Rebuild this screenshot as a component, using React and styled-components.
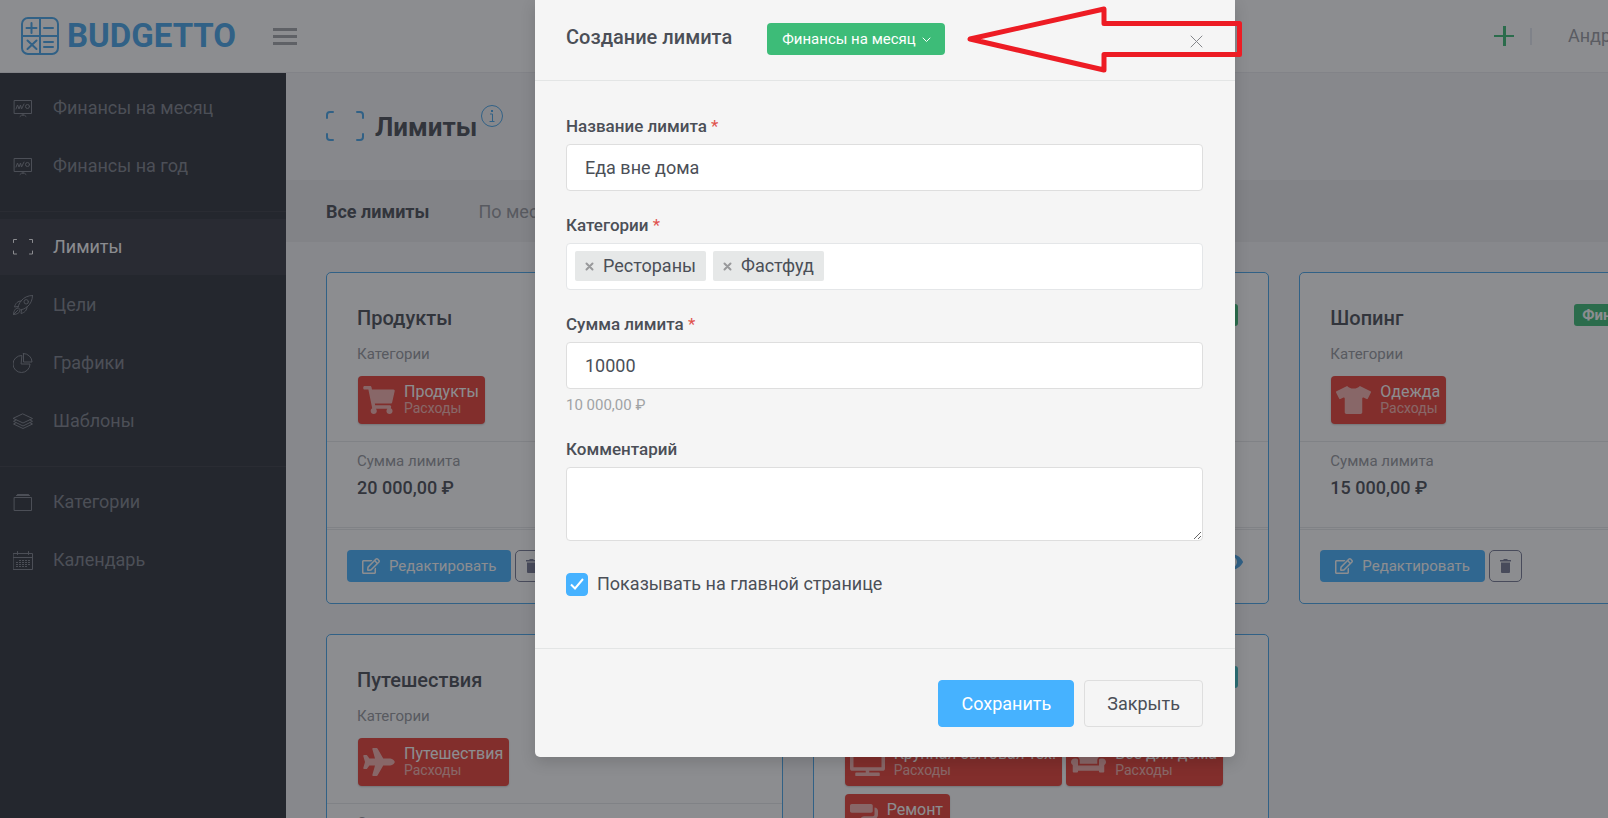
import React from "react";
import styled, { createGlobalStyle } from "styled-components";
import {
  FaShoppingCart,
  FaTshirt,
  FaPlane,
  FaTv,
  FaCouch,
  FaPaintRoller,
  FaRegEdit,
  FaEye,
} from "react-icons/fa";

const Global = createGlobalStyle`
  *, *::before, *::after { box-sizing: border-box; }
  body {
    margin: 0;
    overflow: hidden;
    background: #f5f5f6;
    color: #4b4f57;
    font-family: Roboto, "Open Sans", sans-serif;
    font-size: 18px;
    line-height: 24px;
  }
  button, input, textarea { font: inherit; color: inherit; }
`;

/* ---------- shell ---------- */

const Viewport = styled.div`
  height: 100vh;
  overflow: hidden;
`;

const Page = styled.div`
  position: relative;
  display: flex;
  flex-direction: column;
  min-width: 1770px;
  height: 100%;
`;

const TopBar = styled.header`
  display: flex;
  align-items: center;
  flex: none;
  height: 73px;
  padding: 0 110px 0 20px;
  background: #fff;
  border-bottom: 1px solid #ebebee;
`;

const Brand = styled.a`
  display: flex;
  align-items: center;
  gap: 7px;
  width: 215px;
  color: #48a6ea;
  font-size: 33px;
  font-weight: 700;
  line-height: 40px;
  text-decoration: none;

  svg { flex: none; }
`;

const IconButton = styled.button`
  display: flex;
  padding: 0;
  border: 0;
  background: none;
  color: ${(p) => p.$color};
  cursor: pointer;
`;

const MenuToggle = styled(IconButton)`
  margin-left: 38px;
`;

const TopActions = styled.div`
  display: flex;
  align-items: center;
  gap: 16px;
  width: 166px;
  margin-left: auto;
`;

const Rule = styled.span`
  width: 2px;
  height: 17px;
  background: #e4e9f0;
`;

const UserName = styled.a`
  padding-left: 20px;
  color: #9a9ca3;
  text-decoration: none;
`;

const Columns = styled.div`
  display: flex;
  flex: 1;
  min-height: 0;
`;

/* ---------- sidebar ---------- */

const Sidebar = styled.nav`
  flex: none;
  width: 286px;
  padding-top: 7px;
  background: #2e323a;
`;

const NavList = styled.ul`
  display: flex;
  flex-direction: column;
  gap: 2px;
  margin: 0;
  padding: 0 0 17px;
  list-style: none;

  & + & {
    padding-top: 7px;
    border-top: 1px solid #3a3d45;
  }
`;

const NavLink = styled.a`
  display: flex;
  align-items: center;
  gap: 20px;
  height: 56px;
  padding-left: 13px;
  background: ${(p) => (p.$active ? "#383a45" : "none")};
  color: ${(p) => (p.$active ? "#fdfdfe" : "#7f838c")};
  text-decoration: none;

  svg { flex: none; }
`;

/* ---------- content ---------- */

const Main = styled.main`
  flex: 1;
  min-width: 0;
`;

const TitleBar = styled.div`
  display: flex;
  align-items: center;
  gap: 11px;
  height: 107px;
  padding: 0 40px;
  color: #48a6ea;
`;

const TitleGroup = styled.div`
  display: flex;
  align-items: center;
  gap: 4px;
`;

const PageTitle = styled.h1`
  margin: 0;
  color: #4b4e57;
  font-size: 26px;
  font-weight: 700;
  line-height: 36px;
`;

const TabBar = styled.nav`
  display: flex;
  align-items: center;
  gap: 49px;
  height: 62px;
  padding: 2px 40px 0;
  background: #ebebed;
`;

const Tab = styled.a`
  color: ${(p) => (p.$active ? "#4b4e57" : "#96989e")};
  font-weight: ${(p) => (p.$active ? 700 : 400)};
  text-decoration: none;
`;

const CardGrid = styled.div`
  display: grid;
  grid-template-columns: repeat(3, 1fr);
  align-items: start;
  gap: 30px;
  padding: 30px 14px 30px 40px;
`;

const CardBox = styled.article`
  display: flex;
  flex-direction: column;
  background: #fff;
  border: 1px solid #48a6ea;
  border-radius: 5px;
`;

const CardTop = styled.div`
  min-height: 169px;
  padding: 30px 30px 8px;
  border-bottom: 1px solid #e7e8ea;
`;

const CardHead = styled.div`
  display: flex;
  justify-content: space-between;
  height: 39px;
  padding-top: 1px;
`;

const CardTitle = styled.h2`
  margin: 0;
  padding-top: 2px;
  color: #4b4e57;
  font-size: 20px;
  font-weight: 500;
  line-height: 24px;
`;

const Badge = styled.span`
  height: 22px;
  padding: 0 8px;
  border-radius: 3px;
  background: ${(p) => p.$color};
  color: #fff;
  font-size: 15px;
  font-weight: 700;
  line-height: 22px;
`;

const Caption = styled.div`
  color: #96989e;
  font-size: 15px;
  line-height: 24px;
`;

const Tags = styled.div`
  display: flex;
  flex-wrap: wrap;
  gap: 8px 4px;
  padding: 10px 0 8px 1px;
`;

const Tag = styled.a`
  display: flex;
  align-items: center;
  gap: 9px;
  height: 48px;
  padding: 0 6px 0 5px;
  border-radius: 4px;
  background: #ea4136;
  box-shadow: 0 1px 2px rgba(0, 0, 0, 0.2);
  color: #fff;
  text-decoration: none;

  svg {
    width: ${(p) => p.$iconWidth}px;
    height: 28px;
    opacity: 0.6;
  }
`;

const TagText = styled.span`
  display: flex;
  flex-direction: column;
  font-size: 16px;
  line-height: 16px;

  small {
    font-size: 14px;
    line-height: 16px;
    opacity: 0.6;
  }
`;

const CardSum = styled.div`
  height: 86px;
  padding: 7px 30px 0;
  border-bottom: 1px solid #e7e8ea;
`;

const Amount = styled.div`
  padding-top: 3px;
  color: #4b4e57;
  font-weight: 500;
`;

const CardFoot = styled.div`
  display: flex;
  align-items: flex-start;
  gap: 4px;
  margin-top: 1px;
  padding: 20px 25px 21px 20px;
  border-top: 1px solid #e7e8ea;
`;

const EditButton = styled.button`
  display: flex;
  align-items: center;
  gap: 9px;
  height: 32px;
  padding: 0 15px;
  border: 0;
  border-radius: 4px;
  background: #46b2ff;
  color: #fff;
  font-size: 15px;
`;

const TrashButton = styled.button`
  display: flex;
  align-items: center;
  justify-content: center;
  width: 33px;
  height: 32px;
  padding: 0;
  border: 1px solid #767a94;
  border-radius: 5px;
  background: none;
  color: #767a94;
`;

const Watch = styled(IconButton)`
  margin: 0 0 0 auto;
`;

/* ---------- modal ---------- */

const Backdrop = styled.div`
  position: absolute;
  inset: 0;
  display: flex;
  align-items: flex-start;
  justify-content: center;
  background: rgba(26, 28, 34, 0.5);
`;

const Dialog = styled.section`
  width: 700px;
  border-radius: 0 0 5px 5px;
  background: #f5f5f5;
  box-shadow: 0 5px 15px rgba(0, 0, 0, 0.15);
`;

const DialogHead = styled.header`
  display: flex;
  align-items: center;
  gap: 35px;
  height: 81px;
  padding: 0 32px 2px 31px;
  border-bottom: 1px solid #e3e5e5;
`;

const DialogTitle = styled.h2`
  margin: 0;
  padding-bottom: 4px;
  font-size: 20px;
  font-weight: 500;
  line-height: 24px;
`;

const PeriodButton = styled.button`
  display: flex;
  align-items: center;
  gap: 6px;
  height: 32px;
  padding: 0 14px 0 15px;
  border: 0;
  border-radius: 4px;
  background: #3dbc78;
  color: #fff;
  font-size: 15px;
`;

const CloseIcon = styled(IconButton)`
  margin: 4px 0 0 auto;
`;

const DialogBody = styled.div`
  display: flex;
  flex-direction: column;
  gap: 22px;
  padding: 33px 32px 52px 31px;
`;

const Field = styled.div`
  display: flex;
  flex-direction: column;
`;

const Label = styled.label`
  margin-bottom: 6px;
  font-size: 17px;
  font-weight: 500;
  line-height: 24px;

  em {
    color: #e0524d;
    font-style: normal;
    font-weight: 400;
  }
`;

const TextInput = styled.input`
  height: 47px;
  padding: 0 18px;
  border: 1px solid #dedede;
  border-radius: 4px;
  background: #fff;
  outline: 0;
`;

const Notes = styled.textarea`
  display: block;
  height: 74px;
  padding: 10px 18px;
  border: 1px solid #dedede;
  border-radius: 4px;
  background: #fff;
  outline: 0;
  resize: vertical;
`;

const ChipBox = styled.div`
  display: flex;
  gap: 7px;
  height: 47px;
  padding: 7px 8px;
  border: 1px solid #e4e6e8;
  border-radius: 4px;
  background: #fff;
`;

const Chip = styled.span`
  display: flex;
  align-items: center;
  gap: 9px;
  height: 30px;
  padding: 0 10px;
  border-radius: 2px;
  background: #e6e8e8;
`;

const ChipRemove = styled.button`
  display: flex;
  padding: 0;
  border: 0;
  background: none;
  color: #98999b;
`;

const Hint = styled.div`
  margin-top: 6px;
  color: #a0a3a5;
  font-size: 15px;
  line-height: 20px;
`;

const CheckRow = styled.label`
  display: flex;
  align-items: center;
  gap: 9px;
  margin-top: 9px;
`;

const CheckWrap = styled.span`
  display: grid;
  width: 22px;
  height: 23px;
  place-items: center;

  > * { grid-area: 1 / 1; }
  svg { pointer-events: none; }
`;

const CheckInput = styled.input`
  appearance: none;
  width: 100%;
  height: 100%;
  margin: 0;
  border: 1px solid #c8ccd0;
  border-radius: 4px;
  background: #fff;

  &:checked {
    border-color: #46b2ff;
    background: #46b2ff;
  }
`;

const DialogFoot = styled.footer`
  display: flex;
  justify-content: flex-end;
  gap: 10px;
  padding: 31px 32px 30px 31px;
  border-top: 1px solid #e3e5e5;
`;

const ActionButton = styled.button`
  height: 47px;
  padding: 0 22px;
  border: 1px solid ${(p) => (p.$primary ? "#46b2ff" : "#dedede")};
  border-radius: 4px;
  background: ${(p) => (p.$primary ? "#46b2ff" : "transparent")};
  color: ${(p) => (p.$primary ? "#fff" : "#4b4f57")};
`;

const Pointer = styled.svg`
  position: absolute;
  top: 4px;
  left: 50%;
  margin-left: 80px;
  pointer-events: none;
`;

/* ---------- icons ---------- */

const Line = ({ size = 20, box = 20, width = 1, children }) => (
  <svg
    width={size}
    height={size}
    viewBox={`0 0 ${box} ${box}`}
    fill="none"
    stroke="currentColor"
    strokeWidth={width}
    strokeLinecap="round"
    strokeLinejoin="round"
    aria-hidden="true"
  >
    {children}
  </svg>
);

const BoardIcon = () => (
  <Line>
    <path d="M1.500 2.500h17v13h-17zM10 15.500v1.500M7 18.500l1.500-1.300h3l1.500 1.300" />
    <path d="M3 11l1.500-4 1.500 4 1.500-4 1 4 2.500-5" />
    <circle cx="14.500" cy="8.500" r="2" />
  </Line>
);
const FrameIcon = () => (
  <Line>
    <path d="M.5 5.500v-3h3M16.500 2.500h3v3M19.500 14v3h-3M3.500 17h-3v-3" />
  </Line>
);
const RocketIcon = () => (
  <Line>
    <path d="M19.500.5c-4.500 0-8.500 1.800-11.500 5.500-1.500 2-2.500 4-3 6.500l2.500 2.500c2.500-.5 4.500-1.500 6.500-3 3.700-3 5.500-7 5.500-11.500z" />
    <circle cx="13.200" cy="6.800" r="2.200" />
    <path d="M8 6c-3 0-5.500 2-6.500 6l3.700-.500M14 12c0 3-2 5.500-6 6.500l.500-3.700" />
    <path d="M4.500 13.200c-2.500.300-3.500 2-4 6.300 4.300-.500 6-1.500 6.300-4M.5 19.500L5 15" />
  </Line>
);
const PieIcon = () => (
  <Line>
    <path d="M8.500 2.500a8.500 8.500 0 1 0 8.500 8.500H8.500z" />
    <path d="M10.500.5v8.500h8.500a8.500 8.500 0 0 0-8.500-8.500z" />
  </Line>
);
const LayersIcon = () => (
  <Line>
    <path d="M10 3l9.500 4.500L10 12 .5 7.500z" />
    <path d="M3 9l-2.500 1.300L10 15l9.500-4.700L17 9M3 11.700L.5 13 10 17.500l9.500-4.500-2.500-1.300" />
  </Line>
);
const BoxIcon = () => (
  <Line>
    <path d="M1.500 5.500h17v13h-17zM3.500 3.500h13M4.500 2.500h11" />
  </Line>
);
const CalendarIcon = () => (
  <Line>
    <path d="M.5 3.500h19v16H.5zM.5 7.500h19M4.500 1.500v3M15.500 1.500v3" />
    <path d="M6 10.500h11M3 12.500h14M3 14.500h14M3 16.500h11" strokeDasharray="2 1" strokeLinecap="butt" />
  </Line>
);
const LogoIcon = () => (
  <Line size={40} box={40} width={2}>
    <rect x="2" y="2" width="36" height="36" rx="6" />
    <path d="M20 2v36M2 20h36M11.500 7v10M6.500 12h10M24 12h9M7.500 24.500l9 8.500M16.500 24.500l-9 8.500M24 26h9M24 31h9" />
  </Line>
);
const TrashIcon = () => (
  <svg width="11" height="14" viewBox="0 0 11 14" fill="currentColor" aria-hidden="true">
    <path d="M3.500 0h4v1H11v1.500H0V1h3.500zM1 3.500h9v9.500a1 1 0 0 1-1 1H2a1 1 0 0 1-1-1z" />
  </svg>
);

/* ---------- data ---------- */

const menu = [
  [
    { text: "Финансы на месяц", icon: BoardIcon },
    { text: "Финансы на год", icon: BoardIcon },
  ],
  [
    { text: "Лимиты", icon: FrameIcon, active: true },
    { text: "Цели", icon: RocketIcon },
    { text: "Графики", icon: PieIcon },
    { text: "Шаблоны", icon: LayersIcon },
  ],
  [
    { text: "Категории", icon: BoxIcon },
    { text: "Календарь", icon: CalendarIcon },
  ],
];

const GREEN = "#3cbc76";
const TEAL = "#3fc1c9";

const cards = [
  { title: "Продукты", badge: GREEN, sum: "20 000,00 ₽", tags: [["Продукты", FaShoppingCart, 32]] },
  { title: "", badge: GREEN, sum: "", tags: [] },
  { title: "Шопинг", badge: GREEN, sum: "15 000,00 ₽", tags: [["Одежда", FaTshirt, 35]] },
  { title: "Путешествия", badge: TEAL, sum: "", tags: [["Путешествия", FaPlane, 32]] },
  {
    title: "",
    badge: TEAL,
    sum: "",
    tags: [
      ["Крупная бытовая тех.", FaTv, 35],
      ["Все для дома", FaCouch, 35],
      ["Ремонт", FaPaintRoller, 28],
    ],
  },
];

function Card({ title, badge, sum, tags }) {
  return (
    <CardBox>
      <CardTop>
        <CardHead>
          <CardTitle>{title}</CardTitle>
          <Badge $color={badge}>{badge === GREEN ? "Финансы на месяц" : "Финансы на год"}</Badge>
        </CardHead>
        <Caption>Категории</Caption>
        <Tags>
          {tags.map(([name, Icon, iconWidth]) => (
            <Tag href="#" key={name} $iconWidth={iconWidth}>
              <Icon aria-hidden="true" />
              <TagText>
                {name}
                <small>Расходы</small>
              </TagText>
            </Tag>
          ))}
        </Tags>
      </CardTop>
      <CardSum>
        <Caption>Сумма лимита</Caption>
        <Amount>{sum}</Amount>
      </CardSum>
      <CardFoot>
        <EditButton type="button">
          <FaRegEdit size={18} aria-hidden="true" />
          Редактировать
        </EditButton>
        <TrashButton type="button" aria-label="Удалить">
          <TrashIcon />
        </TrashButton>
        <Watch type="button" $color="#48a6ea" aria-label="Показать">
          <FaEye size={24} />
        </Watch>
      </CardFoot>
    </CardBox>
  );
}

function ChipItem({ children }) {
  return (
    <Chip>
      <ChipRemove type="button" aria-label={`Убрать ${children}`}>
        <Line size={9} box={9} width={2}>
          <path d="M1.500 1.500l6 6M7.500 1.500l-6 6" />
        </Line>
      </ChipRemove>
      {children}
    </Chip>
  );
}

function LimitDialog() {
  return (
    <Dialog role="dialog" aria-modal="true" aria-labelledby="dialog-title">
      <DialogHead>
        <DialogTitle id="dialog-title">Создание лимита</DialogTitle>
        <PeriodButton type="button">
          Финансы на месяц
          <Line size={9} box={9}>
            <path d="M1 3l3.500 3.500L8 3" />
          </Line>
        </PeriodButton>
        <CloseIcon type="button" $color="#85878b" aria-label="Закрыть окно">
          <Line size={13} box={13}>
            <path d="M1 1l11 11M12 1L1 12" />
          </Line>
        </CloseIcon>
      </DialogHead>
      <DialogBody>
        <Field>
          <Label htmlFor="name">
            Название лимита <em>*</em>
          </Label>
          <TextInput id="name" defaultValue="Еда вне дома" />
        </Field>
        <Field>
          <Label as="div" id="cats">
            Категории <em>*</em>
          </Label>
          <ChipBox role="group" aria-labelledby="cats">
            <ChipItem>Рестораны</ChipItem>
            <ChipItem>Фастфуд</ChipItem>
          </ChipBox>
        </Field>
        <Field>
          <Label htmlFor="sum">
            Сумма лимита <em>*</em>
          </Label>
          <TextInput id="sum" defaultValue="10000" />
          <Hint>10 000,00 ₽</Hint>
        </Field>
        <Field>
          <Label htmlFor="note">Комментарий</Label>
          <Notes id="note" />
        </Field>
        <CheckRow>
          <CheckWrap>
            <CheckInput type="checkbox" defaultChecked />
            <svg width="14" height="12" viewBox="0 0 14 12" fill="none" stroke="#fff" strokeWidth="2" aria-hidden="true">
              <path d="M1 6.500l4 4L13 1" />
            </svg>
          </CheckWrap>
          Показывать на главной странице
        </CheckRow>
      </DialogBody>
      <DialogFoot>
        <ActionButton type="button" $primary>Сохранить</ActionButton>
        <ActionButton type="button">Закрыть</ActionButton>
      </DialogFoot>
    </Dialog>
  );
}

export default function App() {
  return (
    <Viewport>
      <Global />
      <Page>
        <TopBar>
          <Brand href="#">
            <LogoIcon />
            BUDGETTO
          </Brand>
          <MenuToggle type="button" $color="#a5a7ab" aria-label="Меню">
            <svg width="24" height="17" viewBox="0 0 24 17" fill="currentColor">
              <path d="M0 0h24v3H0zM0 7h24v3H0zM0 14h24v3H0z" />
            </svg>
          </MenuToggle>
          <TopActions>
            <IconButton type="button" $color={GREEN} aria-label="Добавить">
              <svg width="20" height="20" viewBox="0 0 20 20" fill="currentColor">
                <path d="M9 0h3v9h8v2h-8v9H9v-9H0V9h9z" />
              </svg>
            </IconButton>
            <Rule />
            <UserName href="#">Андрей</UserName>
          </TopActions>
        </TopBar>
        <Columns>
          <Sidebar>
            {menu.map((group) => (
              <NavList key={group[0].text}>
                {group.map(({ text, icon: Icon, active }) => (
                  <li key={text}>
                    <NavLink href="#" $active={active}>
                      <Icon />
                      {text}
                    </NavLink>
                  </li>
                ))}
              </NavList>
            ))}
          </Sidebar>
          <Main>
            <TitleBar>
              <svg width="38" height="31" viewBox="0 0 38 31" fill="none" stroke="currentColor" strokeWidth="2" strokeLinecap="round" aria-hidden="true">
                <path d="M1 7V4q0-3 3-3h3M31 1h3q3 0 3 3v3M37 23v3q0 3-3 3h-3M7 29H4q-3 0-3-3v-3" />
              </svg>
              <TitleGroup>
                <PageTitle>Лимиты</PageTitle>
                <IconButton type="button" $color="#48a6ea" aria-label="Справка">
                  <svg width="22" height="44" viewBox="0 0 22 44" fill="none" stroke="currentColor">
                    <circle cx="11" cy="11" r="10.500" />
                    <path d="M9 9h2.500v7.500M8.500 16.500h5" />
                    <path d="M11 5v2" strokeWidth="2" />
                  </svg>
                </IconButton>
              </TitleGroup>
            </TitleBar>
            <TabBar>
              <Tab href="#" $active>Все лимиты</Tab>
              <Tab href="#">По месяцам</Tab>
            </TabBar>
            <CardGrid>
              {cards.map((card, i) => (
                <Card key={i} {...card} />
              ))}
            </CardGrid>
          </Main>
        </Columns>
        <Backdrop>
          <LimitDialog />
          <Pointer width="280" height="72" viewBox="0 0 280 72" fill="none" stroke="#ed1c24" strokeWidth="5">
            <path d="M5 35L139 5v14.500h135.500v31H139V66z" strokeLinejoin="round" />
          </Pointer>
        </Backdrop>
      </Page>
    </Viewport>
  );
}
